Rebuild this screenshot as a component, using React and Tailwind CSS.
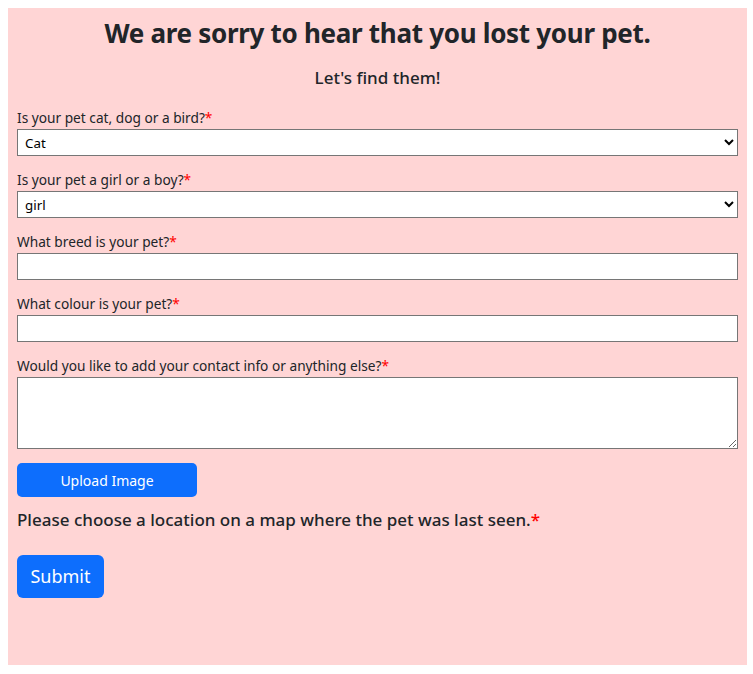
import React, { useState } from 'react';

const fieldClass =
  'block w-full h-[27px] border border-[#767676] bg-white text-[13.33px] text-black pl-[3px] rounded-none';

const Label = ({ children }) => (
  <label className="block text-[13.7px] leading-[22px] text-[#212529]">
    {children}
    <span className="text-[#ff0000]">*</span>
  </label>
);

const App = () => {
  const [species, setSpecies] = useState('Cat');
  const [gender, setGender] = useState('girl');
  const [breed, setBreed] = useState('');
  const [colour, setColour] = useState('');
  const [notes, setNotes] = useState('');

  return (
    <div className="font-['Noto_Sans',sans-serif] text-[#212529]">
      <div className="m-2 w-[739px] bg-[#ffd5d5] px-[9px] pt-2 pb-[67px]">
        {/* Header */}
        <h1 className="text-center text-[26px] leading-[34px] font-bold tracking-[-0.3px]">
          We are sorry to hear that you lost your pet.
        </h1>
        <h2 className="mt-4 text-center text-[17px] leading-[24px] font-medium">Let's find them!</h2>

        {/* Form fields */}
        <form className="mt-[17px]" onSubmit={(e) => e.preventDefault()}>
          <div className="mb-[13px]">
            <Label>Is your pet cat, dog or a bird?</Label>
            <select value={species} onChange={(e) => setSpecies(e.target.value)} className={fieldClass}>
              <option>Cat</option>
              <option>Dog</option>
              <option>Bird</option>
            </select>
          </div>

          <div className="mb-[13px]">
            <Label>Is your pet a girl or a boy?</Label>
            <select value={gender} onChange={(e) => setGender(e.target.value)} className={fieldClass}>
              <option>girl</option>
              <option>boy</option>
            </select>
          </div>

          <div className="mb-[13px]">
            <Label>What breed is your pet?</Label>
            <input type="text" value={breed} onChange={(e) => setBreed(e.target.value)} className={fieldClass} />
          </div>

          <div className="mb-[13px]">
            <Label>What colour is your pet?</Label>
            <input type="text" value={colour} onChange={(e) => setColour(e.target.value)} className={fieldClass} />
          </div>

          <div>
            <Label>Would you like to add your contact info or anything else?</Label>
            <textarea
              value={notes}
              onChange={(e) => setNotes(e.target.value)}
              className="block w-full h-[72px] border border-[#767676] bg-white text-[13.33px] rounded-none"
            />
          </div>

          <button
            type="button"
            className="mt-[14px] h-[34px] w-[180px] rounded-[5px] bg-[#0d6efd] text-[14px] text-white"
          >
            Upload Image
          </button>

          <p className="mt-[11px] text-[17px] leading-[24px] font-medium">
            Please choose a location on a map where the pet was last seen.
            <span className="text-[#ff0000]">*</span>
          </p>

          <button
            type="submit"
            className="mt-[23px] h-[43px] w-[87px] rounded-[6px] bg-[#0d6efd] text-[18px] text-white"
          >
            Submit
          </button>
        </form>
      </div>
    </div>
  );
};

export default App;
